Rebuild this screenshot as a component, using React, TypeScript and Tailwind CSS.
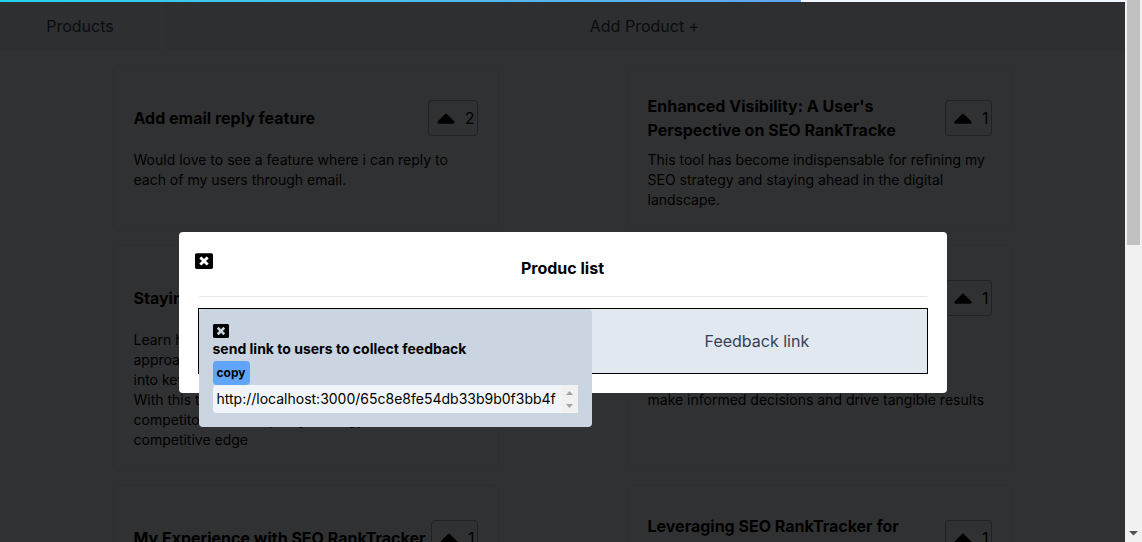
import React from "react";
import { FaCaretUp, FaWindowClose } from "react-icons/fa";

type Feedback = { title: string; body: string; votes: number };

const feedback: Feedback[] = [
  {
    title: "Add email reply feature",
    body: "Would love to see a feature where i can reply to each of my users through email.",
    votes: 2,
  },
  {
    title: "Enhanced Visibility: A User's Perspective on SEO RankTracke",
    body: "This tool has become indispensable for refining my SEO strategy and staying ahead in the digital landscape.",
    votes: 1,
  },
  {
    title: "Staying Ahead of the Curve",
    body: "Learn how SEO RankTracker changed my\napproach to search, offering insights\ninto keyword rankings and trends.\nWith this tool I can monitor my\ncompetitors and adapt my strategy\ncompetitive edge",
    votes: 1,
  },
  {
    title: "Data Driven Decisions with SEO RankTracker",
    body: "The reports are clear and easy to share.\nSEO RankTracker turns raw numbers into\nsimple insights, which makes it easier to\nmake informed decisions and drive tangible results",
    votes: 1,
  },
  {
    title: "My Experience with SEO RankTracker",
    body: "A reliable companion for tracking daily changes in search rankings.",
    votes: 1,
  },
  {
    title: "Leveraging SEO RankTracker for Business Growth",
    body: "It helped our team find new opportunities and grow organic traffic.",
    votes: 1,
  },
];

function Card({ title, body, votes }: Feedback) {
  return (
    <article className="rounded-md border border-[#dfe5ed] p-5">
      <div className="flex min-h-16 items-center justify-between py-2">
        <h2 className="font-bold">{title}</h2>
        <button
          type="button"
          aria-label={`Upvote ${title}`}
          className="flex h-9 items-center gap-1 rounded border border-[#94a3b8] px-0.5"
        >
          <FaCaretUp size={30} />
          <span>{votes}</span>
        </button>
      </div>
      <p className="text-sm whitespace-pre-line">{body}</p>
    </article>
  );
}

function Page() {
  return (
    <div className="min-h-full bg-[#f1f5f9]">
      <nav className="flex h-12 gap-1 text-[#334155]">
        <button type="button" className="w-40 bg-[#e2e8f0]">
          Products
        </button>
        <button type="button" className="flex-1 bg-[#e2e8f0]">
          Add Product +
        </button>
      </nav>
      <main className="grid grid-cols-2 gap-x-32 gap-y-3.5 px-[10%] py-[15px]">
        {feedback.map((item) => (
          <Card key={item.title} {...item} />
        ))}
      </main>
    </div>
  );
}

function LinkPopup() {
  return (
    <section className="absolute top-0 left-0 z-10 w-[54%] rounded bg-[#cbd5e1] p-3.5">
      <button type="button" aria-label="Close link" className="block">
        <FaWindowClose size={16} />
      </button>
      <label htmlFor="feedback-link" className="block text-sm font-bold">
        send link to users to collect feedback
      </label>
      <button
        type="button"
        className="mt-0.5 block h-6 rounded bg-[#60a5fa] px-1 text-xs font-bold"
      >
        copy
      </button>
      <div className="flex h-7 overflow-hidden rounded-l bg-[#f1f5f9]">
        <textarea
          id="feedback-link"
          readOnly
          rows={1}
          defaultValue="http://localhost:3000/65c8e8fe54db33b9b0f3bb4f"
          className="h-7 min-w-0 flex-1 resize-none overflow-hidden pt-1 pl-1 text-sm whitespace-nowrap outline-none"
        />
        <svg width="17" height="28" viewBox="0 0 17 28" className="bg-[#f1f1f1]" aria-hidden="true">
          <path d="M5 10h7L8.500 6zM5 19h7l-3.500 4z" fill="#a3a3a3" />
        </svg>
      </div>
    </section>
  );
}

function Modal() {
  return (
    <div role="dialog" aria-label="Produc list" className="relative w-3xl rounded bg-white px-5 pt-5 pb-[19px]">
      <button type="button" aria-label="Close" className="absolute top-5 left-4">
        <FaWindowClose size={18} />
      </button>
      <h1 className="mt-1 text-center font-bold">Produc list</h1>
      <hr className="mt-4 mb-[11px] border-[#e5e7eb]" />
      <div className="relative -mx-px border border-black">
        <table className="w-full table-fixed bg-[#e2e8f0]">
          <tbody>
            <tr className="h-16 text-center text-[#334155]">
              <td className="w-[53.4%]">SEO RankTracker</td>
              <td>
                <a href="#feedback">Feedback link</a>
              </td>
            </tr>
          </tbody>
        </table>
        <LinkPopup />
      </div>
    </div>
  );
}

function Scrollbar() {
  return (
    <div className="flex w-[17px] shrink-0 flex-col items-center justify-between bg-[#f1f1f1]" aria-hidden="true">
      <div className="h-[45.2%] w-[13px] bg-[#c1c1c1]" />
      <svg width="17" height="17" viewBox="0 0 17 17">
        <path d="M4 6h9l-4.500 4.500z" fill="#505050" />
      </svg>
    </div>
  );
}

export default function App() {
  return (
    <div className="flex h-screen overflow-hidden font-['Inter',sans-serif] text-base text-black">
      <div className="relative flex min-w-0 flex-1 flex-col">
        <div className="h-0.5 shrink-0 bg-[#eff6ff]">
          <div className="h-full w-[71.2%] bg-linear-to-r from-[#22d3ee] to-[#60a5fa]" />
        </div>
        <div className="min-h-0 flex-1 overflow-hidden">
          <Page />
        </div>
        <div className="absolute inset-x-0 top-0.5 bottom-0 bg-black/80" />
        <div className="absolute inset-0 flex items-start justify-center pt-[232px]">
          <Modal />
        </div>
      </div>
      <Scrollbar />
    </div>
  );
}
